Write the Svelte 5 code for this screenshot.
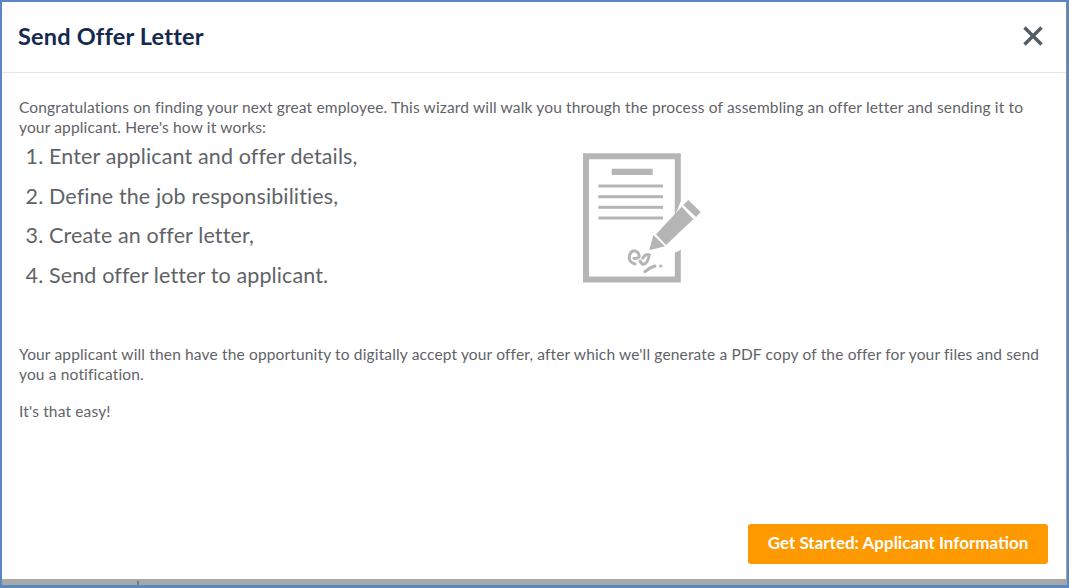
<script>
  const steps = [
    'Enter applicant and offer details,',
    'Define the job responsibilities,',
    'Create an offer letter,',
    'Send offer letter to applicant.'
  ];
</script>

<div class="frame">
  <div class="dialog">
    <header class="head">
      <h1>Send Offer Letter</h1>
      <button class="close" aria-label="Close">
        <svg width="22" height="22" viewBox="0 0 22 22"><path d="M2.5 2.5 19.5 19.5M19.5 2.5 2.5 19.5" stroke="#555b63" stroke-width="3.4" fill="none"/></svg>
      </button>
    </header>

    <div class="body">
      <p>Congratulations on finding your next great employee. This wizard will walk you through the process of assembling an offer letter and sending it to your applicant. Here's how it works:</p>

      <div class="steps-row">
        <ol>
          {#each steps as s}
            <li>{s}</li>
          {/each}
        </ol>
        <svg class="doc" width="120" height="130" viewBox="0 0 120 130">
          <path d="M3 3.2H94.8V126.5H3Z" fill="none" stroke="#b5b5b5" stroke-width="6"/>
          <rect x="28.7" y="15.7" width="41" height="6.3" fill="#b5b5b5"/>
          <g fill="#b5b5b5">
            <rect x="15.3" y="31.5" width="64.7" height="3"/>
            <rect x="15.3" y="42.2" width="64.7" height="3"/>
            <rect x="15.3" y="52.8" width="64.7" height="3"/>
            <rect x="15.3" y="63.5" width="64.7" height="3"/>
          </g>
          <path d="M98 48 106 56 104 94 91 100 80 90Z" fill="#fff"/>
          <path d="M73 81.3 98.7 53.7 110.3 66.3 83 92Z" fill="#b5b5b5"/>
          <path d="M105.3 47 117.7 59 113 64 100.3 52Z" fill="#b5b5b5"/>
          <path d="M66.3 97.3 70.3 82 82 93.3Z" fill="#b5b5b5"/>
          <path d="M52 111C48 110 46 107 46.3 104.7 46.5 101 47 99 50 98 53 97 56 100 56.3 103 56 105 53 106 51 105.3M57 108C58 110 59 111.3 60.3 111.3 63 111 65 108.5 66.3 102 64 101 61 102 59.7 105.3M62 118.7C65 116 68 114 72 113M77.5 113H78" fill="none" stroke="#b5b5b5" stroke-width="3" stroke-linecap="round"/>
        </svg>
      </div>

      <p>Your applicant will then have the opportunity to digitally accept your offer, after which we'll generate a PDF copy of the offer for your files and send you a notification.</p>
      <p class="easy">It's that easy!</p>
    </div>

    <footer class="foot">
      <button class="primary">Get Started: Applicant Information</button>
    </footer>
  </div>
</div>

<style>
  :global(body) {
    margin: 0;
    background: #fff;
  }

  .frame {
    position: relative;
    width: 1069px;
    height: 588px;
    box-sizing: border-box;
    border: 2px solid #5b87c0;
    border-bottom-width: 3px;
    background: linear-gradient(#8a8a8a, #a8a8a8);
    overflow: hidden;
    font-family: Lato, "Liberation Sans", sans-serif;
  }

  /* darker tick in the band under the dialog */
  .frame::after {
    content: '';
    position: absolute;
    left: 135px;
    top: 579px;
    width: 2px;
    height: 4px;
    background: #7a7a7a;
  }

  .dialog {
    height: 577px;
    margin-right: 1px;
    background: #fff;
    display: flex;
    flex-direction: column;
  }

  .head {
    height: 71px;
    flex: none;
    box-sizing: border-box;
    border-bottom: 1px solid #e4e4e4;
    padding: 0 22px 0 16px;
    display: flex;
    align-items: center;
    justify-content: space-between;
  }

  h1 {
    margin: 0;
    font-size: 23.5px;
    font-weight: 700;
    letter-spacing: 0.2px;
    color: #14294f;
    padding-bottom: 2px;
  }

  .close {
    width: 22px;
    height: 22px;
    padding: 0;
    border: 0;
    background: none;
    display: flex;
    margin-bottom: 3px;
  }

  .body {
    flex: 1;
    padding: 24px 17px 0;
    color: #5f6368;
    font-size: 15.5px;
    letter-spacing: 0.155px;
    line-height: 20px;
  }

  p {
    margin: 0;
  }

  .steps-row {
    display: flex;
    align-items: flex-start;
    height: 207px;
  }

  ol {
    margin: 0;
    padding: 0 0 0 30px;
    width: 564px;
    box-sizing: border-box;
    font-size: 21.5px;
    letter-spacing: 0.13px;
    line-height: 39.7px;
    flex: none;
  }

  .doc {
    margin-top: 16px;
    flex: none;
    overflow: visible;
  }

  .easy {
    margin-top: 17px;
  }

  .foot {
    flex: none;
    display: flex;
    justify-content: flex-end;
    padding: 0 18px 15px 0;
  }

  .primary {
    width: 300px;
    height: 40px;
    padding: 0 0 3px;
    border: 0;
    border-radius: 3px;
    background: #ff9900;
    color: #fff;
    font-family: inherit;
    font-size: 17px;
    font-weight: 700;
  }
</style>
